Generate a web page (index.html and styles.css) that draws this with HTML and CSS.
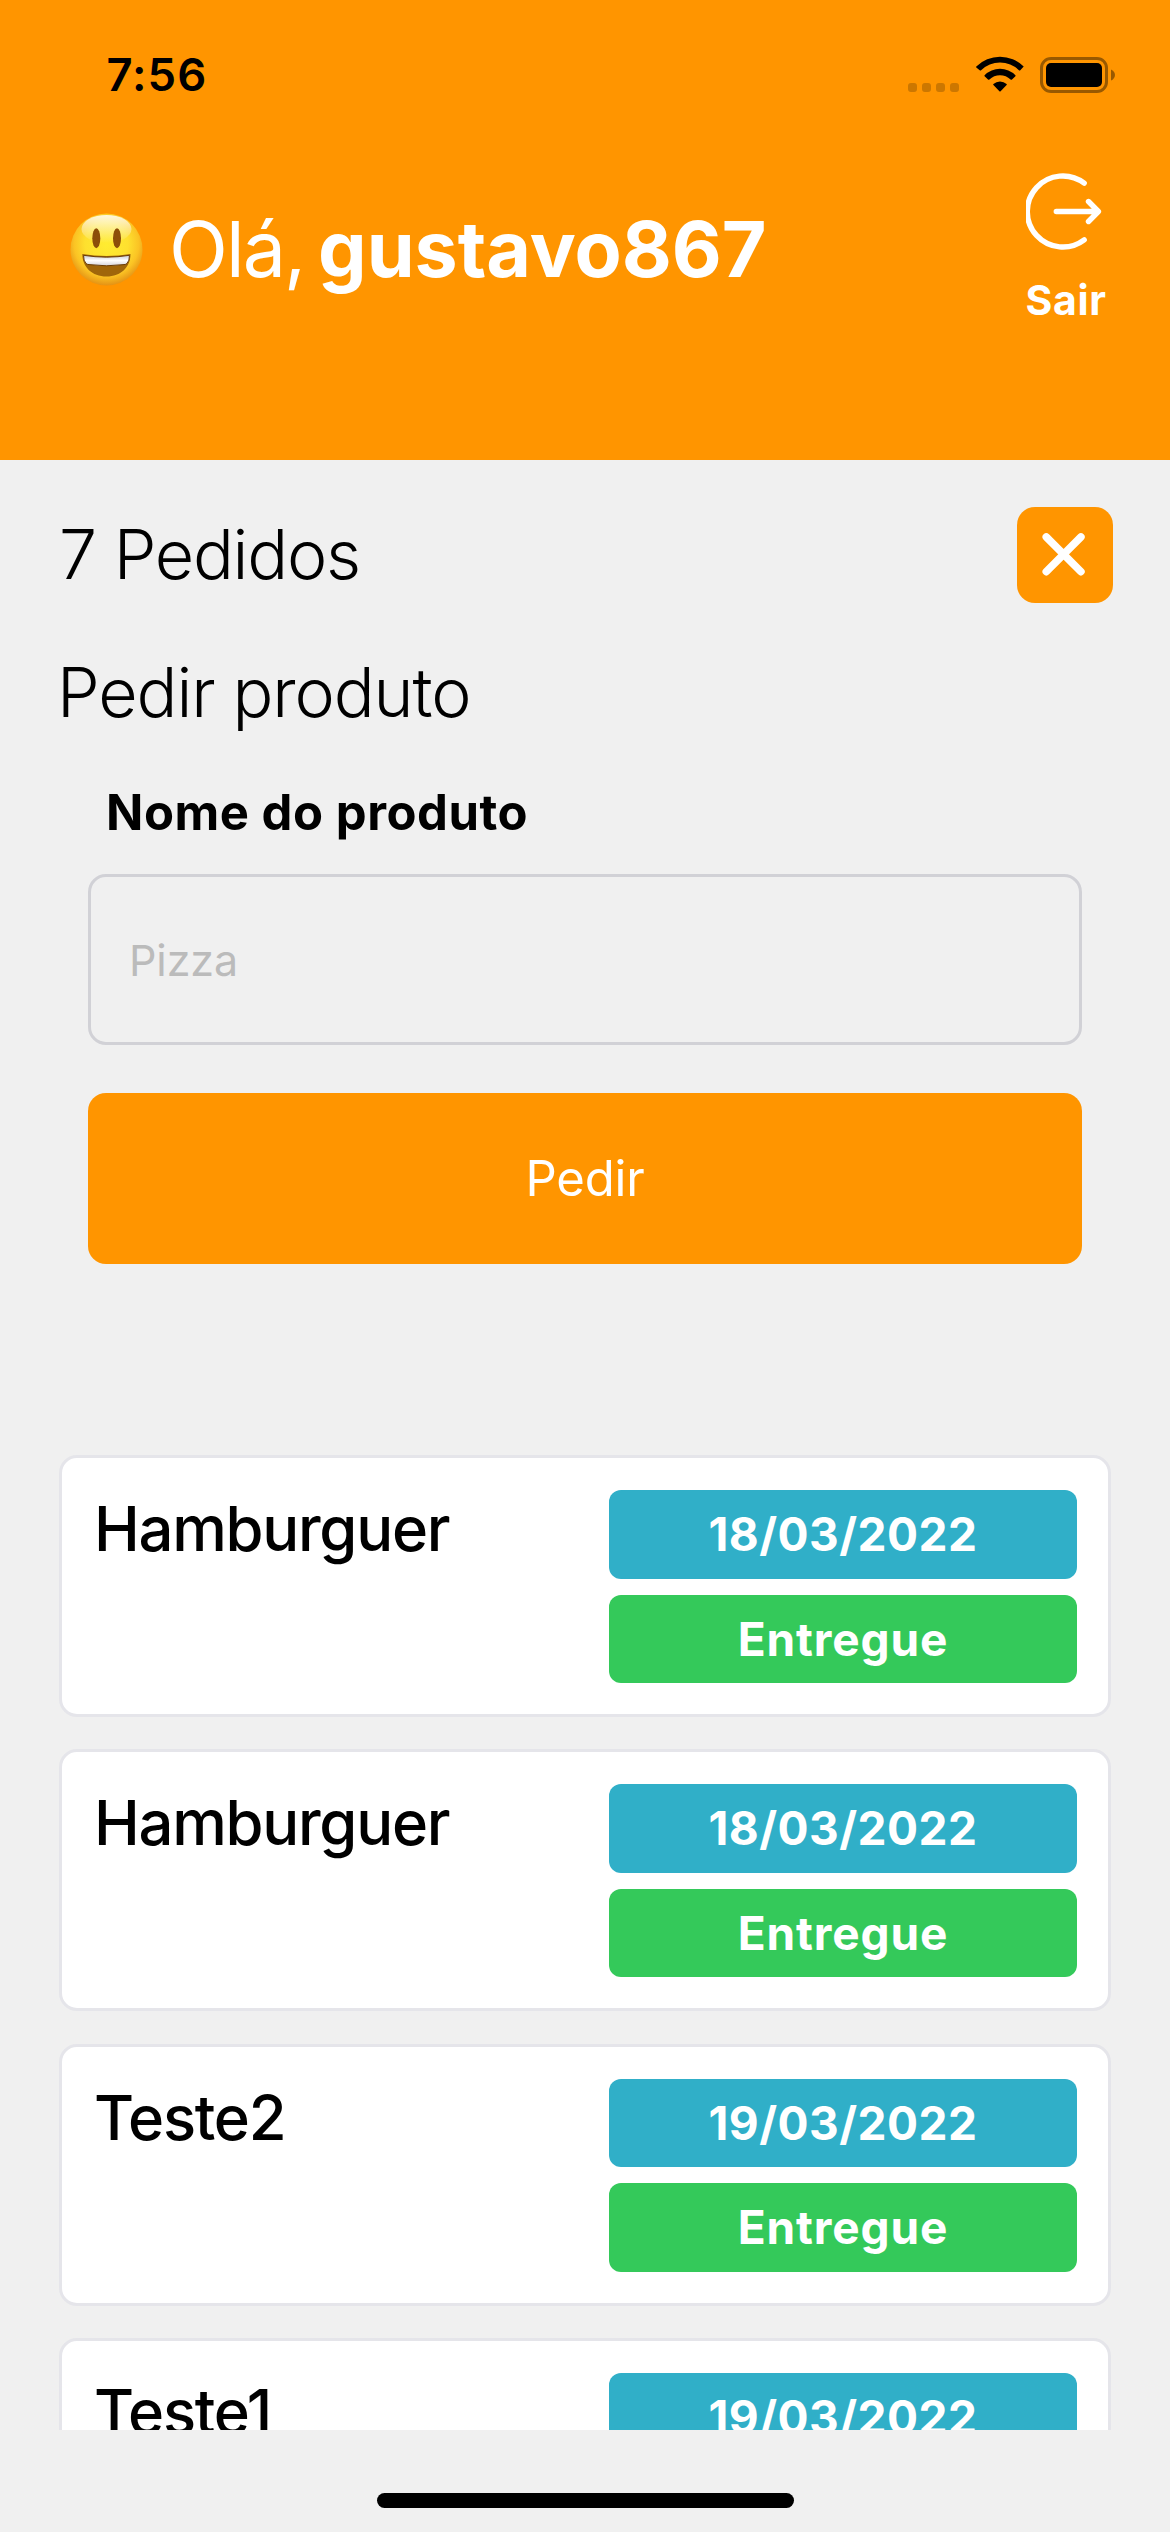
FILE: index.html
```html
<!DOCTYPE html>
<html lang="pt-BR">
<head>
<meta charset="utf-8">
<title>Pedidos</title>
<link rel="stylesheet" href="styles.css">
</head>
<body>
<header class="header">
  <div class="status-bar">
    <span class="time">7:56</span>
    <div class="status-icons">
      <div class="signal"><i></i><i></i><i></i><i></i></div>
      <svg class="wifi" width="50" height="38" viewBox="0 0 50 38">
        <path d="M1.3 11.6A33.6 33.6 0 0 1 48.7 11.6L45.3 15.2Q44.6 15.8 43.9 15.2A27.2 27.2 0 0 0 6.1 15.2Q5.4 15.8 4.7 15.2L1.3 12.4Q.9 12 1.3 11.6Z"/>
        <path d="M9.6 20.2A21.8 21.8 0 0 1 40.4 20.2Q40.9 20.7 40.4 21.2L37 24.4Q36.3 25 35.6 24.4A15.4 15.4 0 0 0 14.4 24.4Q13.7 25 13 24.4L9.6 21.2Q9.1 20.7 9.6 20.2Z"/>
        <path d="M18.4 29A9.8 9.8 0 0 1 31.6 29Q32.1 29.5 31.6 30L25.6 36.2Q25 36.8 24.4 36.2L18.4 30Q17.9 29.5 18.4 29Z"/>
      </svg>
      <svg class="battery" width="76" height="36" viewBox="0 0 76 36">
        <rect x="1.5" y="1.5" width="65" height="33" rx="9.5" fill="none" stroke="#000" stroke-width="3" opacity=".4"/>
        <rect x="6" y="6" width="56" height="24" rx="5"/>
        <path d="M71 12.4C73.4 13.4 75 15.5 75 18S73.4 22.6 71 23.6Z" opacity=".4"/>
      </svg>
    </div>
  </div>
  <div class="user-row">
    <div class="greeting">
      <svg class="emoji" width="73" height="73" viewBox="0 0 73 73" role="img" aria-label="😃">
        <defs>
          <radialGradient id="face" cx=".5" cy=".42" r=".6">
            <stop offset="0" stop-color="#ffec31"/>
            <stop offset=".5" stop-color="#fee02f"/>
            <stop offset=".75" stop-color="#fbc324"/>
            <stop offset="1" stop-color="#e18a12"/>
          </radialGradient>
          <linearGradient id="shine" x1="0" y1="0" x2="0" y2="1">
            <stop offset="0" stop-color="#fff" stop-opacity=".85"/>
            <stop offset="1" stop-color="#fff" stop-opacity="0"/>
          </linearGradient>
          <linearGradient id="teeth" x1="0" y1="0" x2="0" y2="1">
            <stop offset="0" stop-color="#c9c9d2"/>
            <stop offset=".5" stop-color="#fff"/>
            <stop offset="1" stop-color="#d5d5dc"/>
          </linearGradient>
        </defs>
        <circle cx="36.5" cy="36.5" r="36" fill="url(#face)"/>
        <ellipse cx="36.5" cy="16" rx="25" ry="14" fill="url(#shine)"/>
        <ellipse cx="26.3" cy="25.2" rx="4" ry="10" fill="#8c4f09"/>
        <ellipse cx="47" cy="25.2" rx="4" ry="10" fill="#8c4f09"/>
        <path d="M12.3 41Q36.5 45 60.5 41C60.5 54 51 63.5 36.5 63.5S12.3 54 12.3 41Z" fill="#a0660a"/>
        <path d="M13.5 42.3Q36.5 46 59.5 42.3Q59.5 48 57 50.5Q56 51.5 54 51.6Q36.5 54 19 51.6Q17 51.5 16 50.5Q13.5 48 13.5 42.3Z" fill="url(#teeth)" stroke="#6b3d06"/>
      </svg>
      <span class="hello">Olá,</span>
      <strong class="username">gustavo867</strong>
    </div>
    <div class="logout">
      <svg width="80" height="80" viewBox="0 0 80 80" fill="none" stroke="#fff" stroke-width="5.4" stroke-linecap="round" stroke-linejoin="round">
        <path d="M58.2 12.2A35.5 35.5 0 1 0 58.2 68.8M30.3 40.5H71.5M62.5 30.5L72.4 40.5L62.5 50.5"/>
      </svg>
      <span>Sair</span>
    </div>
  </div>
</header>
<main class="content">
  <div class="title-row">
    <h1>7 Pedidos</h1>
    <button class="close" aria-label="Fechar">
      <svg width="96" height="96" viewBox="0 0 96 96" fill="none" stroke="#fff" stroke-width="7.6" stroke-linecap="round">
        <path d="M29.3 30L63.9 64.6M63.9 30L29.3 64.6"/>
      </svg>
    </button>
  </div>
  <h2>Pedir produto</h2>
  <div class="form">
    <label for="produto">Nome do produto</label>
    <input id="produto" type="text" placeholder="Pizza">
    <button class="submit">Pedir</button>
  </div>
  <div class="orders">
    <article class="card">
      <h3>Hamburguer</h3>
      <div class="chips"><span class="chip date">18/03/2022</span><span class="chip done">Entregue</span></div>
    </article>
    <article class="card">
      <h3>Hamburguer</h3>
      <div class="chips"><span class="chip date">18/03/2022</span><span class="chip done">Entregue</span></div>
    </article>
    <article class="card">
      <h3>Teste2</h3>
      <div class="chips"><span class="chip date">19/03/2022</span><span class="chip done">Entregue</span></div>
    </article>
    <article class="card">
      <h3>Teste1</h3>
      <div class="chips"><span class="chip date">19/03/2022</span></div>
    </article>
  </div>
</main>
<footer class="home"><div class="home-indicator"></div></footer>
</body>
</html>
```
FILE: styles.css
```css
* { box-sizing: border-box; margin: 0; padding: 0; }

body {
  width: 1170px;
  height: 2532px;
  display: flex;
  flex-direction: column;
  overflow: hidden;
  background: #f0f0f0;
  color: #000;
  font-family: Inter, "Liberation Sans", sans-serif;
}

svg { display: block; flex: none; }
button { border: 0; font: inherit; color: #fff; background: #ff9500; }

.header { height: 460px; flex: none; background: #ff9500; }

.status-bar {
  height: 149px;
  display: flex;
  align-items: center;
  justify-content: space-between;
  padding: 0 54px 0 106.5px;
}
.time { font-size: 45.4px; font-weight: 600; letter-spacing: 1px; line-height: 60px; }
.status-icons { display: flex; align-items: center; }
.signal { display: flex; gap: 5px; margin: 25px 16px 0 0; }
.signal i { width: 9px; height: 9px; border-radius: 3px; background: #cc7700; }
.wifi { margin: 0 15px 2px 0; }

.user-row { display: flex; justify-content: space-between; color: #fff; }
.greeting {
  height: 200px;
  display: flex;
  align-items: center;
  padding-left: 70px;
  font-size: 77px;
  line-height: 100px;
}
.hello { width: 149px; margin-left: 26px; font-weight: 400; letter-spacing: -1.9px; white-space: nowrap; }
.username { font-weight: 700; }
.logout {
  width: 84px;
  margin: 22px 62px 0 0;
  display: flex;
  flex-direction: column;
  align-items: center;
  gap: 24px;
  font-size: 41px;
  line-height: 50px;
  font-weight: 700;
  letter-spacing: .65px;
}

.content { height: 1970px; flex: none; padding: 47px 57px 0 59px; overflow: hidden; }
.title-row { display: flex; justify-content: space-between; align-items: center; height: 96px; }
h1, h2 { font-size: 68px; font-weight: 300; line-height: 80px; }
h1 { margin-bottom: 2px; letter-spacing: -1.25px; }
.close { width: 96px; height: 96px; border-radius: 18px; }
h2 { margin: 49px 0 0 -2px; letter-spacing: -1.1px; }

.form { display: flex; flex-direction: column; padding: 51px 31px 0 29px; }
.form label {
  margin-left: 18px;
  font-size: 49px;
  font-weight: 700;
  letter-spacing: .54px;
  line-height: 60px;
}
.form input {
  height: 171px;
  margin-top: 31px;
  padding: 0 38px;
  border: 3px solid #d1d1d6;
  border-radius: 18px;
  background: transparent;
  font-family: inherit;
  font-size: 43px;
  letter-spacing: -.1px;
}
.form input::placeholder { color: #bbb; opacity: 1; }
.submit {
  height: 171px;
  margin-top: 48px;
  border-radius: 18px;
  font-size: 49px;
  letter-spacing: -.2px;
  line-height: 60px;
}

.orders { display: flex; flex-direction: column; gap: 32.33px; margin: 191px 2px 0 0; }
.card {
  height: 262px;
  flex: none;
  display: flex;
  justify-content: space-between;
  padding: 32px 31px 0 32px;
  border: 3px solid #e5e5ea;
  border-radius: 18px;
  background: #fff;
}
.card h3 { margin-top: 9px; font-size: 61.5px; font-weight: 500; letter-spacing: -1.27px; line-height: 60px; }
.chips { width: 468px; display: flex; flex-direction: column; gap: 16px; }
.chip {
  height: 88.5px;
  border-radius: 12px;
  color: #fff;
  font-size: 46px;
  font-weight: 700;
  line-height: 88.5px;
  text-align: center;
}
.date { background: #30afc8; letter-spacing: .49px; }
.done { background: #34c95a; letter-spacing: .89px; }

.home { flex: 1; display: flex; justify-content: center; align-items: flex-start; padding-top: 63px; }
.home-indicator { width: 417px; height: 15px; border-radius: 8px; background: #000; }
```
